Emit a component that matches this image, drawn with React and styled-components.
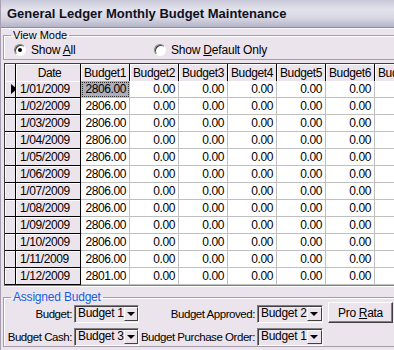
import React from 'react';
import styled, { createGlobalStyle } from 'styled-components';

const GlobalStyle = createGlobalStyle`
  html, body {
    margin: 0;
    padding: 0;
    background: #ece4ec;
  }
  body {
    font-family: "Liberation Sans", Arial, sans-serif;
    font-size: 11px;
    color: #000;
  }
`;

const Window = styled.div`
  width: 394px;
  height: 350px;
  overflow: hidden;
  box-sizing: border-box;
  border-left: 1px solid #a8a0b0;
  background: #ece4ec;
`;

const TitleBar = styled.div`
  height: 27px;
  display: flex;
  align-items: center;
  padding-left: 6px;
  font-size: 13px;
  font-weight: bold;
  color: #101020;
  background: linear-gradient(#c8c8d8 0%, #e2e2ec 35%, #d8d8e4 65%, #b4b4c8 100%);
  border-bottom: 1px solid #8c8ca4;
  box-shadow: 0 1px 0 #f8f8fc;
`;

const Group = styled.fieldset`
  margin: ${(p) => p.$top || '1px'} 0 0 2px;
  padding: 0;
  width: 420px;
  box-sizing: border-box;
  border: 1px solid #a49ca8;
  box-shadow: inset 1px 1px 0 #fff;
`;

const Legend = styled.legend`
  margin-left: 7px;
  padding: 0 2px;
  line-height: 13px;
  font-size: ${(p) => (p.$blue ? '12px' : '11px')};
  letter-spacing: ${(p) => (p.$blue ? '-0.2px' : '0')};
  color: ${(p) => (p.$blue ? '#1a5ce0' : '#000')};
`;

const RadioRow = styled.div`
  display: flex;
  align-items: center;
  height: 14px;
  padding: 1px 0 2px 10px;
  font-size: 12px;
  letter-spacing: -0.2px;
`;

const RadioOption = styled.label`
  display: flex;
  align-items: center;
  gap: 5px;
  width: ${(p) => p.$width || 'auto'};
`;

const RadioCircle = styled.span`
  width: 12px;
  height: 12px;
  box-sizing: border-box;
  border-radius: 50%;
  background: #fff;
  border: 1px solid;
  border-color: #808080 #fff #fff #808080;
  box-shadow: inset 1px 1px 0 #404040;
  display: flex;
  align-items: center;
  justify-content: center;
  &::after {
    content: '';
    width: 4px;
    height: 4px;
    border-radius: 50%;
    background: ${(p) => (p.$checked ? '#000' : 'transparent')};
  }
`;

const Table = styled.div`
  margin: 3px 0 0 3px;
  width: 430px;
  border-top: 1px solid #404040;
  border-left: 1px solid #404040;
  border-bottom: 1px solid #808080;
  box-shadow: 0 1px 0 #fff;
  display: grid;
  grid-template-columns: 11px 65px repeat(7, 49px);
  grid-auto-rows: 17px;
  background: #fff;
  font-size: 12px;
  letter-spacing: -0.4px;
`;

const Cell = styled.div`
  box-sizing: border-box;
  white-space: nowrap;
  overflow: hidden;
  display: flex;
  align-items: center;
  height: ${(p) => (p.$head ? '18px' : '17px')};
`;

const FixedCell = styled(Cell)`
  background: #ece4ec;
  border-right: 1px solid #000;
  border-bottom: 1px solid #000;
  box-shadow: inset 1px 1px 0 #fff;
  justify-content: ${(p) => (p.$center ? 'center' : 'flex-start')};
  padding-left: ${(p) => (p.$center ? '0' : '4px')};
`;

const HeadCell = styled(FixedCell)`
  padding-left: 3px;
  justify-content: ${(p) => (p.$center ? 'center' : 'flex-start')};
`;

const ValueCell = styled(Cell)`
  background: ${(p) => (p.$selected ? '#aeacb6' : '#fff')};
  border-right: 1px solid #c0c0c0;
  border-bottom: 1px solid #c0c0c0;
  justify-content: flex-end;
  padding-right: 3px;
  outline: ${(p) => (p.$selected ? '1px dotted #303030' : 'none')};
  outline-offset: -2px;
`;

const Arrow = styled.span`
  width: 0;
  height: 0;
  border-top: 5px solid transparent;
  border-bottom: 5px solid transparent;
  border-left: 6px solid #000;
  margin-left: 2px;
`;

const Form = styled.div`
  display: grid;
  grid-template-columns: 68px 65px 114px 66px 65px;
  grid-auto-rows: 18px;
  column-gap: 2px;
  row-gap: 5px;
  padding-top: 1px;
  font-size: 12px;
  letter-spacing: -0.3px;
`;

const FieldLabel = styled.span`
  justify-self: end;
  align-self: center;
  white-space: nowrap;
  font-size: 11.5px;
  letter-spacing: -0.45px;
`;

const Combo = styled.div`
  display: flex;
  box-sizing: border-box;
  height: 18px;
  border: 1px solid;
  border-color: #808080 #fff #fff #808080;
  box-shadow: inset 1px 1px 0 #404040;
  background: #ece4ec;
`;

const ComboText = styled.span`
  flex: 1;
  padding: 1px 0 0 3px;
  white-space: nowrap;
  line-height: 13px;
`;

const DropButton = styled.span`
  width: 17px;
  margin: 1px 0;
  box-sizing: border-box;
  background: #ece4ec;
  border: 1px solid;
  border-color: #fff #404040 #404040 #fff;
  display: flex;
  align-items: center;
  justify-content: center;
  &::after {
    content: '';
    border-left: 4px solid transparent;
    border-right: 4px solid transparent;
    border-top: 4px solid #000;
  }
`;

const Button = styled.button`
  margin: -3px 0 0 3px;
  height: 21px;
  width: 65px;
  font: inherit;
  letter-spacing: inherit;
  background: #ece4ec;
  border: 1px solid;
  border-color: #fff #404040 #404040 #fff;
  box-shadow: inset -1px -1px 0 #808080;
  padding: 0;
`;

const dates = [
  '1/01/2009', '1/02/2009', '1/03/2009', '1/04/2009', '1/05/2009', '1/06/2009',
  '1/07/2009', '1/08/2009', '1/09/2009', '1/10/2009', '1/11/2009', '1/12/2009',
];
const budgetCols = ['Budget1', 'Budget2', 'Budget3', 'Budget4', 'Budget5', 'Budget6', 'Budget7'];

function ComboBox({ value }) {
  return (
    <Combo>
      <ComboText>{value}</ComboText>
      <DropButton />
    </Combo>
  );
}

export default function App() {
  return (
    <>
      <GlobalStyle />
      <Window>
        <TitleBar>General Ledger Monthly Budget Maintenance</TitleBar>
        <Group>
          <Legend>View Mode</Legend>
          <RadioRow>
            <RadioOption $width="140px">
              <RadioCircle $checked />
              <span>Show <u>A</u>ll</span>
            </RadioOption>
            <RadioOption>
              <RadioCircle />
              <span>Show <u>D</u>efault Only</span>
            </RadioOption>
          </RadioRow>
        </Group>
        <Table>
          <HeadCell $head />
          <HeadCell $head $center>Date</HeadCell>
          {budgetCols.map((c) => (
            <HeadCell key={c} $head>{c}</HeadCell>
          ))}
          {dates.map((d, i) => (
            <React.Fragment key={d}>
              <FixedCell>{i === 0 && <Arrow />}</FixedCell>
              <FixedCell>{d}</FixedCell>
              {budgetCols.map((c, j) => (
                <ValueCell key={c} $selected={i === 0 && j === 0}>
                  {j === 6 ? '' : j === 0 ? (i === 11 ? '2801.00' : '2806.00') : '0.00'}
                </ValueCell>
              ))}
            </React.Fragment>
          ))}
        </Table>
        <Group $top="5px">
          <Legend $blue>Assigned Budget</Legend>
          <Form>
            <FieldLabel>Budget:</FieldLabel>
            <ComboBox value="Budget 1" />
            <FieldLabel>Budget Approved:</FieldLabel>
            <ComboBox value="Budget 2" />
            <Button>Pro <u>R</u>ata</Button>
            <FieldLabel>Budget Cash:</FieldLabel>
            <ComboBox value="Budget 3" />
            <FieldLabel>Budget Purchase Order:</FieldLabel>
            <ComboBox value="Budget 1" />
          </Form>
        </Group>
      </Window>
    </>
  );
}
